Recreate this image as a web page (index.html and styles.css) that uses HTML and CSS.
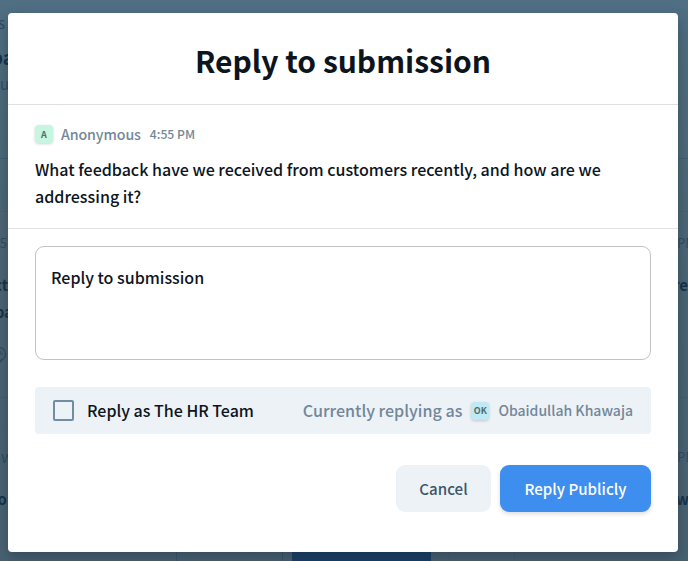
FILE: index.html
```html
<!DOCTYPE html>
<html lang="en">
<head>
<meta charset="utf-8">
<title>Reply to submission</title>
<link rel="stylesheet" href="styles.css">
</head>
<body>
<div class="backdrop" aria-hidden="true">
  <span class="rule r1"></span><span class="rule r2"></span><span class="rule r3"></span><span class="rule r4"></span>
  <span class="bg left" style="top:12px;right:683px">s</span>
  <span class="bg left strong large" style="top:43px;right:674px">pa</span>
  <span class="bg left" style="top:73px;right:679px">u</span>
  <span class="bg left small" style="top:233px;right:681px">5</span>
  <span class="bg left strong" style="top:274px;right:680px">ct</span>
  <span class="bg left strong" style="top:301px;right:675px">pa</span>
  <svg class="bubble" viewBox="0 0 18 18"><circle cx="9" cy="7" r="6.5"/><path d="M9 13v3l4-4M9 7h4M9 5h3"/></svg>
  <span class="bg left" style="top:446px;right:675px">aw</span>
  <span class="bg left strong" style="top:488px;right:681px">o</span>
  <span class="bg small" style="top:233px;left:677px">PM</span>
  <span class="bg strong" style="top:274px;left:673px">re</span>
  <span class="bg small" style="top:447px;left:677px">PM</span>
  <span class="bg strong" style="top:488px;left:676px">w</span>
  <span class="ghost g1"></span><span class="ghost g2"></span><span class="ghost g3"></span>
</div>
<main class="modal">
  <header class="head"><h1>Reply to submission</h1></header>
  <section class="question">
    <div class="meta"><span class="avatar green">A</span><span class="name">Anonymous</span><span class="time">4:55 PM</span></div>
    <p>What feedback have we received from customers recently, and how are we <br>addressing it?</p>
  </section>
  <section class="form">
    <div class="field"><span>Reply to submission</span></div>
    <div class="identity">
      <span class="check"></span><span class="as">Reply as The HR Team</span>
      <span class="current">Currently replying as</span><span class="avatar cyan">OK</span><span class="user">Obaidullah Khawaja</span>
    </div>
    <div class="actions"><button class="cancel"><span>Cancel</span></button><button class="submit"><span>Reply Publicly</span></button></div>
  </section>
</main>
</body>
</html>
```
FILE: styles.css
```css
* { box-sizing: border-box; }
body {
  margin: 0;
  width: 688px;
  height: 561px;
  overflow: hidden;
  position: relative;
  padding: 13px 10px 9px 8px;
  background: linear-gradient(#506f84, #4e6c7c 12%, #4a6473 50%, #496272);
  font-family: "Noto Sans CJK JP", "Noto Sans", sans-serif;
  font-weight: 500;
  font-size: 16px;
  color: #0c141d;
}
.backdrop { position: absolute; inset: 0; overflow: hidden; }
.bg { position: absolute; font-size: 15px; line-height: 22px; color: #304c61; white-space: nowrap; font-weight: 400; }
.bg.small { font-size: 13px; line-height: 20px; }
.bg.strong { color: #16324a; font-weight: 700; }
.bg.large { font-size: 19px; line-height: 28px; }
.rule { position: absolute; left: 0; right: 0; height: 1px; background: #405e73; }
.r1 { top: 158px; }
.r2 { top: 211px; background: #456277; }
.r3 { top: 397px; }
.r4 { top: 425px; background: #456277; }
.bubble { position: absolute; left: -10px; top: 347px; width: 18px; height: 18px; fill: none; stroke: #2f4c61; stroke-width: 1.2; }
.ghost { position: absolute; top: 545px; height: 30px; }
.g1 { left: 176px; width: 107px; border: 1px solid #36566f; border-radius: 8px; }
.g2 { left: 292px; width: 139px; background: #193f65; }
.g3 { left: 449px; width: 66px; border: 1px solid #435e70; }
.modal {
  position: relative;
  width: 670px;
  height: 539px;
  background: #fff;
  border-radius: 4px;
  box-shadow: 0 6px 14px rgba(20, 40, 55, .38);
}
.head { height: 92px; border-bottom: 1px solid #dfdfdf; display: flex; align-items: center; justify-content: center; }
h1 { margin: 2px 0 0; font-size: 30px; font-weight: 700; line-height: 40px; white-space: nowrap; }
.question { height: 124px; padding: 17px 27px 0; border-bottom: 1px solid #e2e2e2; }
.meta { display: flex; align-items: center; height: 24px; color: #738799; white-space: nowrap; }
.avatar { width: 18px; height: 18px; border-radius: 4px; display: flex; align-items: center; justify-content: center; font-size: 9px; font-weight: 700; color: #526c6c; box-shadow: 0 1px 3px rgba(0, 0, 0, .18); flex: none; }
.green { background: #c6f6df; }
.cyan { background: #bee9f5; }
.name { margin-left: 8px; font-size: 14.2px; letter-spacing: -.1px; }
.time { margin-left: 9px; font-size: 12.2px; }
p { margin: 10px 0 0; font-size: 16.05px; line-height: 26.5px; white-space: nowrap; }
.form { padding: 17px 27px 0; }
.field { height: 114px; border: 1px solid #c3c3c3; border-radius: 9px; padding: 17px 15px; line-height: 26px; }
.identity { margin-top: 27px; height: 47px; border-radius: 4px; background: #edf2f7; display: flex; align-items: center; padding: 0 18px; white-space: nowrap; }
.check { width: 21px; height: 21px; border: 2px solid #718da0; border-radius: 2px; flex: none; }
.as { margin-left: 13px; }
.as, .current, .user { padding-bottom: 2px; }
.current { margin-left: auto; color: #738799; font-size: 16.1px; }
.identity .avatar { margin-left: 9px; }
.user { margin-left: 9px; font-size: 14px; color: #738799; }
.actions { margin-top: 31px; display: flex; justify-content: flex-end; gap: 9px; }
button { border: 0; padding: 0; height: 47px; border-radius: 9px; font: inherit; font-size: 15.1px; line-height: 24px; }
.cancel { width: 95px; background: #edf2f7; color: #3e566a; }
.submit { width: 151px; background: #3e8eef; color: #fff; box-shadow: 0 2px 4px rgba(0, 0, 0, .14); }
button span { position: relative; top: -1px; }
```
